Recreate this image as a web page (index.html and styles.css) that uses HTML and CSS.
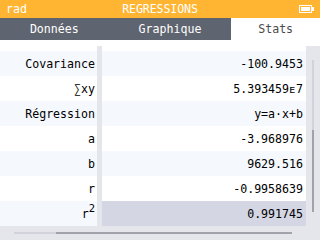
FILE: index.html
```html
<!DOCTYPE html>
<html lang="fr">
<head>
  <meta charset="utf-8">
  <title>Regressions</title>
  <meta name="viewport" content="width=device-width,initial-scale=1">
  <link rel="stylesheet" href="styles.css">
</head>
<body>

  <!-- Status bar -->
  <header class="status">
    <span class="angle">rad</span>
    <span class="title">REGRESSIONS</span>
    <span class="battery">
      <svg width="16" height="8" viewBox="0 0 16 8" aria-hidden="true">
        <rect x="0.5" y="0.5" width="12" height="7" fill="none" stroke="#fff"/>
        <rect x="2" y="2" width="9" height="4" fill="#fff"/>
        <rect x="13" y="2" width="2" height="4" fill="#fff"/>
      </svg>
    </span>
  </header>

  <!-- Tabs -->
  <nav class="tabs">
    <span class="tab">Données</span>
    <span class="tab">Graphique</span>
    <span class="tab active">Stats</span>
  </nav>

  <main class="main">
    <div class="panel">
      <div class="table">
        <div class="row alt"><span class="key">Covariance</span><span class="val">-100.9453</span></div>
        <div class="row"><span class="key">∑xy</span><span class="val">5.393459ᴇ7</span></div>
        <div class="row alt"><span class="key">Régression</span><span class="val">y=a·x+b</span></div>
        <div class="row"><span class="key">a</span><span class="val">-3.968976</span></div>
        <div class="row alt"><span class="key">b</span><span class="val">9629.516</span></div>
        <div class="row"><span class="key">r</span><span class="val">-0.9958639</span></div>
        <div class="row alt"><span class="key">r<sup>2</sup></span><span class="val selected">0.991745</span></div>
      </div>
      <div class="gutter">
        <div class="vtrack"><div class="vthumb"></div></div>
      </div>
    </div>
    <div class="hbar">
      <div class="htrack"><div class="hthumb"></div></div>
    </div>
  </main>

</body>
</html>
```

FILE: styles.css
```css
/* RESET */
* { box-sizing:border-box; margin:0; padding:0; }
html, body {
  width:320px; height:240px; overflow:hidden;
  font-family:"DejaVu Sans Mono", "Liberation Mono", monospace;
  font-size:11.6px; color:#000; background:#fff;
}

/* STATUS BAR */
.status {
  height:18px; background:#ffb531; color:#fff;
  display:grid; grid-template-columns:1fr auto 1fr; align-items:center;
  padding:0 6px;
}
.status .title { letter-spacing:-.1px; }
.status .battery { justify-self:end; display:flex; margin-right:-1px; }

/* TABS */
.tabs {
  height:22px; background:#5f6570; display:flex;
}
.tab {
  flex:1 1 auto; display:flex; align-items:center; justify-content:center;
  color:#fff;
}
.tab.active { background:#fff; color:#4b4b4b; flex-grow:.9; }

/* MAIN */
.main { height:200px; padding-top:6px; display:flex; flex-direction:column; }
.panel { flex:1; display:flex; }

.table {
  width:306px; padding-top:5px;
  background:linear-gradient(90deg, #fff 97px, #e5e5ec 97px, #e5e5ec 102px, #fff 102px);
}
.row { height:25px; display:flex; gap:5px; }
.row .key, .row .val {
  display:flex; align-items:center; justify-content:flex-end;
  background:#fff;
}
.row .key { width:97px; padding-right:2px; }
.row .val { flex:1; padding-right:3px; }
.row.alt .key, .row.alt .val { background:#f5f8fd; }
.row .val.selected { background:#d5d6e4; }
.key sup { font-size:10.5px; line-height:1; position:relative; top:-5px; }

/* SCROLLBARS */
.gutter { flex:1; background:#e5e5ec; position:relative; }
.vtrack {
  position:absolute; left:6px; top:14px; width:2px; height:152px;
  background:#d2d2da;
}
.vthumb {
  position:absolute; left:0; bottom:0; width:2px; height:82px;
  background:#a2a2aa;
}
.hbar { height:14px; background:#e5e5ec; position:relative; }
.htrack {
  position:absolute; left:14px; top:6px; width:278px; height:2px;
  background:#d2d2da;
}
.hthumb {
  position:absolute; right:0; top:0; width:236px; height:2px;
  background:#a2a2aa;
}
```
